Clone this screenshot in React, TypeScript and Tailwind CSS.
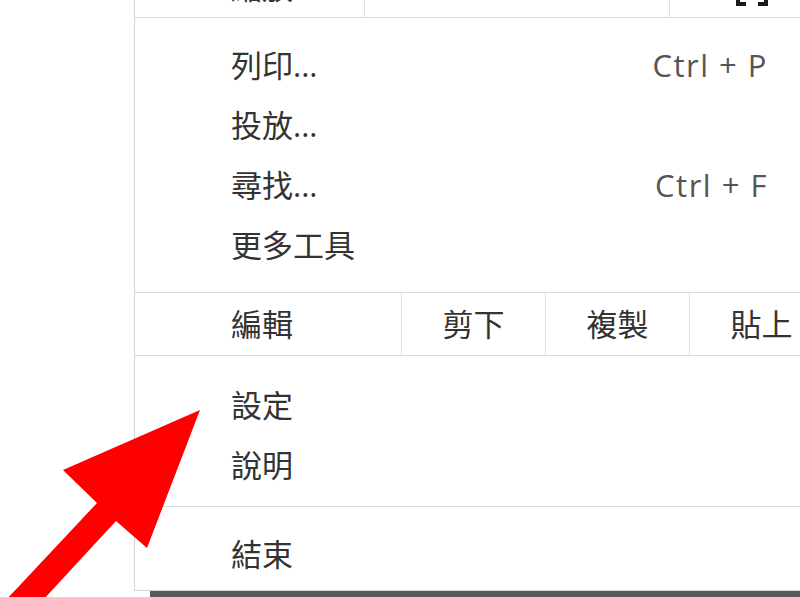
import React from 'react'

const font = { fontFamily: '"Open Sans", "Noto Sans CJK TC", sans-serif' }

function MenuItem({ label, shortcut }: { label: string; shortcut?: string }) {
  return (
    <div className="flex h-[60px] items-center justify-between pl-[96px] pr-[66px]">
      <span>{label}</span>
      {shortcut && <span className="tracking-[1.5px] text-[#555]">{shortcut}</span>}
    </div>
  )
}

function FullscreenIcon() {
  return (
    <svg width="32" height="36" viewBox="0 0 32 36" fill="none" stroke="#1a1a1a" strokeWidth="4">
      <path d="M2 10V2h8M22 2h8v8M2 26v8h8M22 34h8v-8" />
    </svg>
  )
}

function Arrow() {
  return (
    <svg className="pointer-events-none absolute left-0 top-0" width="800" height="597" viewBox="0 0 800 597">
      <polygon points="200,410 147,548 116,521 43,600 6,600 97,503 63,470" fill="#ff0000" />
    </svg>
  )
}

export default function App() {
  return (
    <div className="relative h-[597px] w-[800px] overflow-hidden bg-white text-[31px] text-[#333]" style={font}>
      <div className="ml-[134px] w-[700px] border-b border-l border-[#d4d4d4] bg-white">
        <div className="-mt-[42px] flex h-[60px] border-b border-[#dcdcdc]">
          <div className="flex w-[229px] items-center pl-[96px]">縮放</div>
          <div className="w-[305px] border-l border-[#e0e0e0]" />
          <div className="flex flex-1 items-center justify-center border-l border-[#e0e0e0]">
            <FullscreenIcon />
          </div>
        </div>
        <div className="py-[17px]">
          <MenuItem label="列印..." shortcut="Ctrl + P" />
          <MenuItem label="投放..." />
          <MenuItem label="尋找..." shortcut="Ctrl + F" />
          <MenuItem label="更多工具" />
        </div>
        <div className="flex h-[64px] border-y border-[#dcdcdc]">
          <div className="flex w-[266px] items-center pl-[96px]">編輯</div>
          <div className="flex w-[144px] items-center justify-center border-l border-[#e0e0e0]">剪下</div>
          <div className="flex w-[144px] items-center justify-center border-l border-[#e0e0e0]">複製</div>
          <div className="flex w-[144px] items-center justify-center border-l border-[#e0e0e0]">貼上</div>
        </div>
        <div className="border-b border-[#dcdcdc] pb-[11px] pt-[19px]">
          <MenuItem label="設定" />
          <MenuItem label="說明" />
        </div>
        <div className="pb-[6px] pt-[17px]">
          <MenuItem label="結束" />
        </div>
      </div>
      <div className="ml-[150px] h-[6px] bg-[#5a5a5a]" />
      <Arrow />
    </div>
  )
}
